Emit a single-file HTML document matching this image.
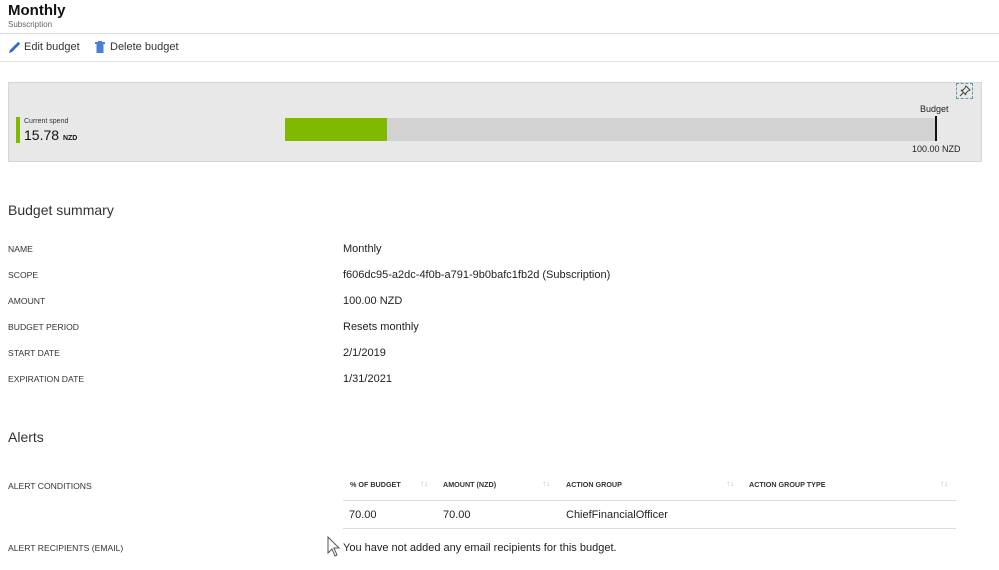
<!DOCTYPE html>
<html><head><meta charset="utf-8"><style>
*{margin:0;padding:0;box-sizing:border-box}
body{width:999px;height:570px;background:#fff;font-family:"Liberation Sans",sans-serif;color:#222;position:relative;overflow:hidden}
.a{position:absolute;white-space:nowrap}
.lbl{font-size:8.6px;color:#333;left:8px}
.val{font-size:11px;color:#222;left:343px}
.th{font-size:7.2px;font-weight:bold;color:#333}
.ar{font-size:8px;color:#bbb}
</style></head><body>
<div class="a" style="left:8px;top:2px;font-size:15px;font-weight:bold;color:#111">Monthly</div>
<div class="a" style="left:8px;top:20px;font-size:8px;color:#666">Subscription</div>
<div class="a" style="left:0;top:33px;width:999px;height:1px;background:#ddd"></div>
<svg class="a" style="left:8px;top:41px" width="13" height="13" viewBox="0 0 13 13"><path d="M1 12 L2 9 L9 2 L11 4 L4 11 Z" fill="#2b6fd6"/><path d="M9.5 1.5 L11.5 3.5" stroke="#2b6fd6" stroke-width="2"/></svg>
<div class="a" style="left:24px;top:41px;font-size:11px;color:#333">Edit budget</div>
<svg class="a" style="left:95px;top:41px" width="10" height="12" viewBox="0 0 10 12"><rect x="0" y="1" width="10" height="2" fill="#4a7fd6"/><rect x="1.5" y="3" width="7" height="9" fill="#4a7fd6"/><rect x="3" y="0" width="4" height="1" fill="#4a7fd6"/></svg>
<div class="a" style="left:110px;top:41px;font-size:11px;color:#333">Delete budget</div>
<div class="a" style="left:0;top:61px;width:999px;height:1px;background:#e2e2e2"></div>

<div class="a" style="left:8px;top:82px;width:974px;height:80px;background:#e8e8e8;border:1px solid #d6d6d6"></div>
<div class="a" style="left:16px;top:117px;width:4px;height:26px;background:#7fba00"></div>
<div class="a" style="left:24px;top:118px;font-size:7px;color:#333">Current spend</div>
<div class="a" style="left:24px;top:127px;font-size:14px;color:#111">15.78 <span style="font-size:7px;font-weight:bold">NZD</span></div>
<div class="a" style="left:285px;top:118px;width:651px;height:23px;background:#d2d2d2"></div>
<div class="a" style="left:285px;top:118px;width:102px;height:23px;background:#7fba00"></div>
<div class="a" style="left:935px;top:116px;width:2px;height:25px;background:#111"></div>
<div class="a" style="left:920px;top:104px;font-size:9px;color:#222">Budget</div>
<div class="a" style="left:912px;top:144px;font-size:9px;color:#222">100.00 NZD</div>
<div class="a" style="left:956px;top:83px;width:17px;height:16px;border:1px dashed #5a9ab5"></div>
<svg class="a" style="left:959px;top:85px" width="12" height="12" viewBox="0 0 12 12"><path d="M7 1 L11 5 L9 6 L6.5 8.5 L7 10 L2 5 L3.5 5.5 L6 3 Z M4 8 L1 11" fill="none" stroke="#444" stroke-width="1"/></svg>

<div class="a" style="left:8px;top:202px;font-size:14px;color:#333">Budget summary</div>
<div class="a lbl" style="top:244px">NAME</div><div class="a val" style="top:243px">Monthly</div>
<div class="a lbl" style="top:270px">SCOPE</div><div class="a val" style="top:269px">f606dc95-a2dc-4f0b-a791-9b0bafc1fb2d (Subscription)</div>
<div class="a lbl" style="top:296px">AMOUNT</div><div class="a val" style="top:295px">100.00 NZD</div>
<div class="a lbl" style="top:322px">BUDGET PERIOD</div><div class="a val" style="top:321px">Resets monthly</div>
<div class="a lbl" style="top:348px">START DATE</div><div class="a val" style="top:347px">2/1/2019</div>
<div class="a lbl" style="top:374px">EXPIRATION DATE</div><div class="a val" style="top:373px">1/31/2021</div>

<div class="a" style="left:8px;top:429px;font-size:14px;color:#333">Alerts</div>
<div class="a lbl" style="top:481px">ALERT CONDITIONS</div>
<div class="a th" style="left:350px;top:480px">% OF BUDGET</div><div class="a ar" style="left:420px;top:479px">↑↓</div>
<div class="a th" style="left:443px;top:480px">AMOUNT (NZD)</div><div class="a ar" style="left:542px;top:479px">↑↓</div>
<div class="a th" style="left:566px;top:480px">ACTION GROUP</div><div class="a ar" style="left:726px;top:479px">↑↓</div>
<div class="a th" style="left:749px;top:480px">ACTION GROUP TYPE</div><div class="a ar" style="left:940px;top:479px">↑↓</div>
<div class="a" style="left:343px;top:500px;width:613px;height:1px;background:#ddd"></div>
<div class="a val" style="left:349px;top:509px">70.00</div>
<div class="a val" style="left:443px;top:509px">70.00</div>
<div class="a val" style="left:566px;top:509px">ChiefFinancialOfficer</div>
<div class="a" style="left:343px;top:528px;width:613px;height:1px;background:#ddd"></div>
<div class="a lbl" style="top:543px">ALERT RECIPIENTS (EMAIL)</div>
<div class="a val" style="top:542px">You have not added any email recipients for this budget.</div>
<svg class="a" style="left:327px;top:536px" width="14" height="22" viewBox="0 0 14 22"><path d="M1 1 L1 17 L5 13 L8 20 L10 19 L7 12 L12 12 Z" fill="#fff" stroke="#555" stroke-width="1"/></svg>
</body></html>
